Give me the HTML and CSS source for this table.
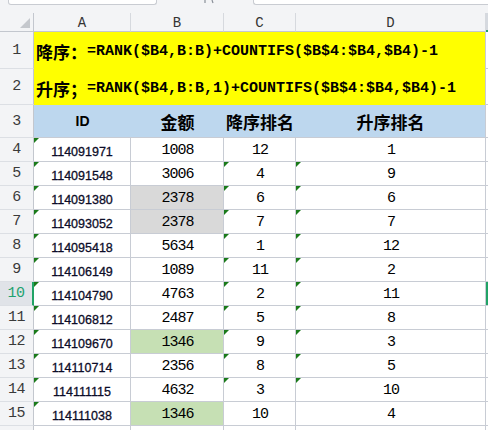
FILE: index.html
```html
<!DOCTYPE html>
<html lang="zh-CN">
<head>
<meta charset="utf-8">
<title>RANK</title>
<link rel="stylesheet" href="styles.css">
</head>
<body>
<div class="topbar">
  <div class="namebox"></div>
  <div class="tools">
    <svg width="12" height="4" viewBox="0 0 12 4"><path d="M2 0 L2 3 M9 0 L10 3" stroke="#8a9099" stroke-width="1.2" fill="none"/></svg>
  </div>
  <div class="fxbox"></div>
</div>
<div class="sheet">
  <div class="corner"><span class="selall"></span></div>
  <div class="ch">A</div>
  <div class="ch">B</div>
  <div class="ch">C</div>
  <div class="ch">D</div>
  <div class="ch ch-sel"></div>

  <div class="rh">1</div>
  <div class="formula"><span class="cjk">降序：</span>=RANK($B4,B:B)+COUNTIFS($B$4:$B4,$B4)-1</div>
  <div class="e"></div>

  <div class="rh">2</div>
  <div class="formula f2"><span class="cjk">升序；</span>=RANK($B4,B:B,1)+COUNTIFS($B$4:$B4,$B4)-1</div>
  <div class="e"></div>

  <div class="rh">3</div>
  <div class="th th-id">ID</div>
  <div class="th">金额</div>
  <div class="th">降序排名</div>
  <div class="th th-last">升序排名</div>
  <div class="e"></div>

  <div class="rh">4</div><div class="c id tri">114091971</div><div class="c n">1008</div><div class="c n">12</div><div class="c n">1</div><div class="e"></div>
  <div class="rh">5</div><div class="c id tri">114091548</div><div class="c n">3006</div><div class="c n tri">4</div><div class="c n tri">9</div><div class="e"></div>
  <div class="rh">6</div><div class="c id tri">114091380</div><div class="c n gray">2378</div><div class="c n tri">6</div><div class="c n tri">6</div><div class="e"></div>
  <div class="rh">7</div><div class="c id tri">114093052</div><div class="c n gray">2378</div><div class="c n tri">7</div><div class="c n tri">7</div><div class="e"></div>
  <div class="rh">8</div><div class="c id tri">114095418</div><div class="c n">5634</div><div class="c n tri">1</div><div class="c n tri">12</div><div class="e"></div>
  <div class="rh">9</div><div class="c id tri">114106149</div><div class="c n">1089</div><div class="c n tri">11</div><div class="c n tri">2</div><div class="e"></div>
  <div class="rh rh-sel">10</div><div class="c id tri">114104790</div><div class="c n">4763</div><div class="c n tri">2</div><div class="c n tri">11</div><div class="e e-sel"></div>
  <div class="rh">11</div><div class="c id tri">114106812</div><div class="c n">2487</div><div class="c n tri">5</div><div class="c n tri">8</div><div class="e"></div>
  <div class="rh">12</div><div class="c id tri">114109670</div><div class="c n green">1346</div><div class="c n tri">9</div><div class="c n tri">3</div><div class="e"></div>
  <div class="rh">13</div><div class="c id tri">114110714</div><div class="c n">2356</div><div class="c n tri">8</div><div class="c n tri">5</div><div class="e"></div>
  <div class="rh">14</div><div class="c id tri">114111115</div><div class="c n">4632</div><div class="c n tri">3</div><div class="c n tri">10</div><div class="e"></div>
  <div class="rh">15</div><div class="c id tri">114111038</div><div class="c n green">1346</div><div class="c n">10</div><div class="c n">4</div><div class="e"></div>
  <div class="rh"></div><div class="c id"></div><div class="c n"></div><div class="c n"></div><div class="c n"></div><div class="e"></div>
</div>
</body>
</html>
```
FILE: styles.css
```css
* { box-sizing: border-box; }
html, body {
  margin: 0;
  padding: 0;
  width: 488px;
  height: 430px;
  overflow: hidden;
  background: #ffffff;
}
body { font-family: "Liberation Sans", "Noto Sans CJK SC", sans-serif; }

.topbar {
  height: 13px;
  background: #f3f4f6;
  display: flex;
  align-items: flex-start;
}
.namebox {
  margin-left: 8px;
  width: 149px;
  height: 5px;
  background: #ffffff;
  border: 1px solid #c9ccd2;
  border-top: none;
  border-radius: 0 0 3px 3px;
}
.tools {
  width: 96px;
  display: flex;
  justify-content: center;
  padding-left: 8px;
}
.fxbox {
  flex: 1;
  height: 5px;
  background: #ffffff;
  border: 1px solid #c9ccd2;
  border-top: none;
  border-right: none;
  border-radius: 0 0 0 3px;
}

.sheet {
  display: grid;
  grid-template-columns: 34px 97px 93px 72px 190px 1fr;
  grid-template-rows: 19px 37px 36px 33px repeat(13, 24px);
}

.corner {
  background: #f3f4f6;
  border-right: 1px solid #c3c7ce;
  border-bottom: 1px solid #c3c7ce;
  position: relative;
}
.selall {
  position: absolute;
  left: 20px;
  top: 5px;
  width: 0;
  height: 0;
  border-left: 10px solid transparent;
  border-bottom: 10px solid #c5c8cd;
}
.ch {
  background: #f3f4f6;
  border-right: 1px solid #d6d9de;
  border-bottom: 1px solid #c3c7ce;
  font-family: "Liberation Mono", monospace;
  font-size: 14px;
  color: #333;
  display: flex;
  align-items: center;
  justify-content: center;
  padding-top: 1px;
}
.ch-sel {
  background: #d5d9df;
  border-right: none;
  border-bottom: 2px solid #21a366;
}

.rh {
  background: #f3f4f6;
  border-right: 1px solid #c3c7ce;
  border-bottom: 1px solid #dcdfe4;
  font-family: "Liberation Mono", monospace;
  font-size: 15px;
  letter-spacing: -0.5px;
  color: #3a3a3a;
  display: flex;
  align-items: center;
  justify-content: center;
}
.rh-sel {
  background: #e0e3e8;
  color: #1fa170;
  border-right: 2px solid #21a366;
}

.formula {
  grid-column: 2 / 6;
  background: #ffff00;
  border-right: 1px solid #c8ccd4;
  font-family: "Liberation Mono", monospace;
  font-weight: bold;
  font-size: 15px;
  color: #000;
  display: flex;
  align-items: center;
  padding-left: 2px;
  padding-top: 1px;
  white-space: nowrap;
}
.f2 { padding-top: 2px; }
.cjk {
  font-family: "Noto Sans CJK SC", sans-serif;
  font-size: 17px;
  font-weight: bold;
}

.e {
  background: #ffffff;
  border-bottom: 1px solid #c8ccd4;
}
.e-sel { box-shadow: inset 3px 0 0 #21a366; }

.th {
  background: #bdd7ee;
  border-bottom: 1px solid #c8ccd4;
  display: flex;
  align-items: center;
  justify-content: center;
  font-family: "Noto Sans CJK SC", sans-serif;
  font-weight: bold;
  font-size: 17px;
  color: #000;
}
.th-id {
  font-family: "Liberation Sans", sans-serif;
  font-size: 14px;
}
.th-last { border-right: 1px solid #c8ccd4; }

.c {
  position: relative;
  background: #ffffff;
  border-right: 1px solid #c8ccd4;
  border-bottom: 1px solid #c8ccd4;
  display: flex;
  align-items: center;
  justify-content: center;
}
.id {
  font-family: "Liberation Sans", sans-serif;
  font-size: 12.5px;
  color: #0c0c28;
  -webkit-text-stroke: 0.3px #0c0c28;
  padding-top: 5px;
}
.n {
  font-family: "Liberation Mono", monospace;
  font-size: 15px;
  letter-spacing: -1px;
  color: #000;
  padding-top: 2px;
  padding-left: 1px;
}
.gray { background: #d9d9d9; }
.green { background: #c6e0b4; }
.tri::before {
  content: "";
  position: absolute;
  top: 0;
  left: 0;
  width: 0;
  height: 0;
  border-top: 5px solid #1a7a1a;
  border-right: 5px solid transparent;
}
```
